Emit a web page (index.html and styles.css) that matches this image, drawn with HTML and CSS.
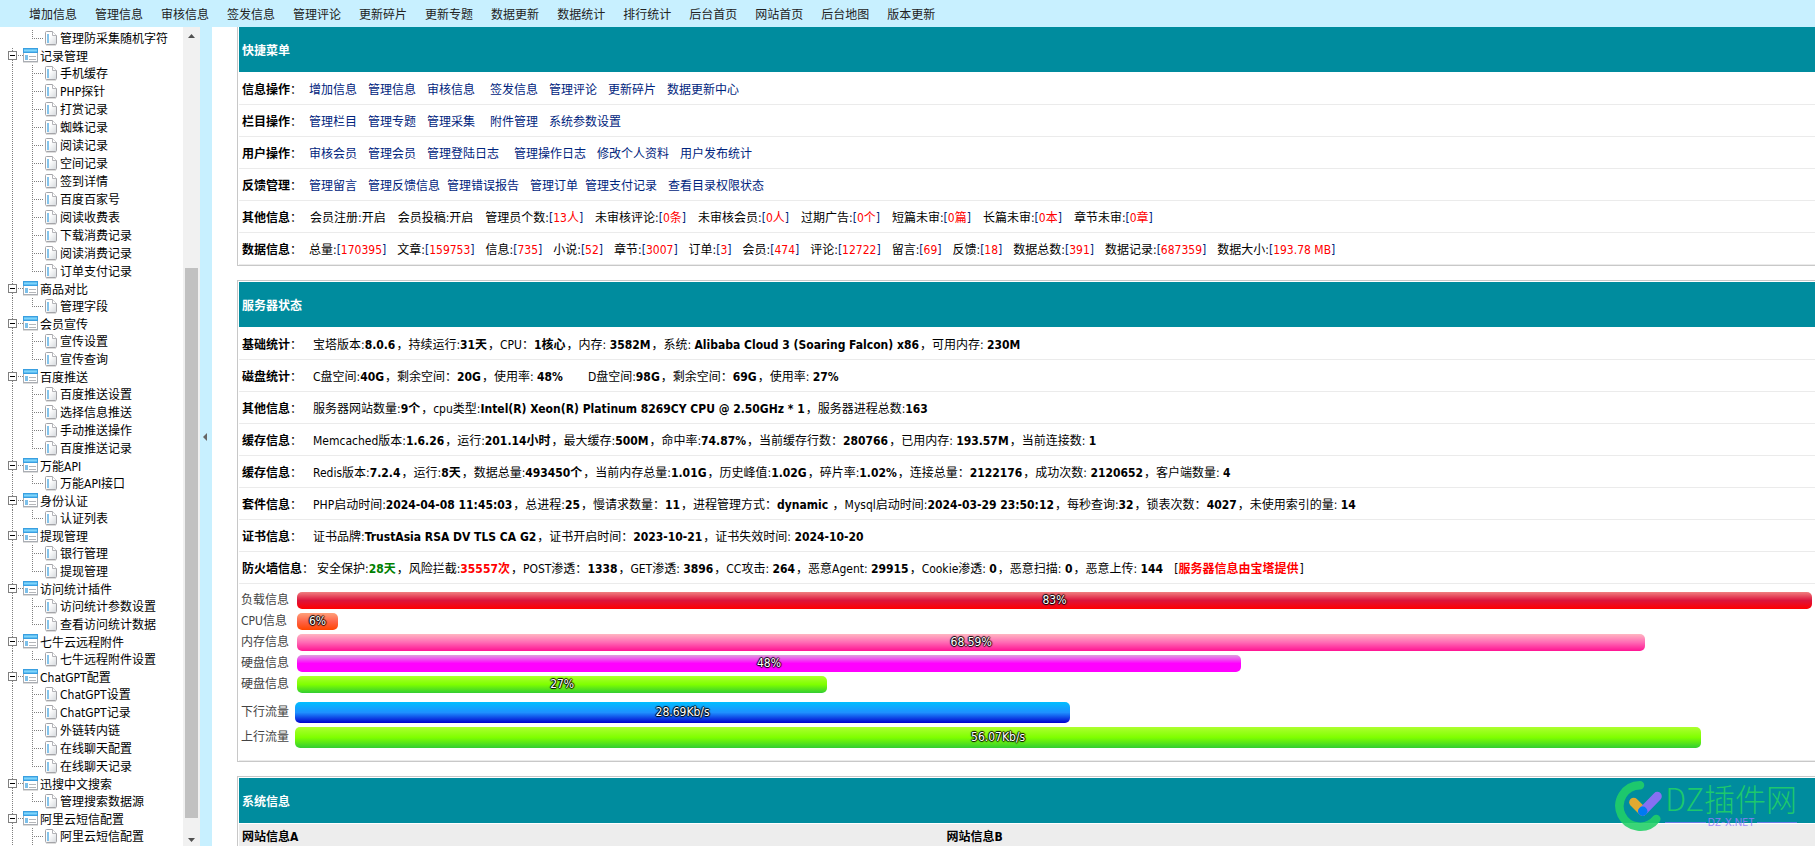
FILE: index.html
```html
<!DOCTYPE html>
<html lang="zh-CN">
<head>
<meta charset="utf-8">
<title>后台管理</title>
<link rel="stylesheet" href="styles.css">
</head>
<body>
<svg class="defs" aria-hidden="true">
  <defs>
    <linearGradient id="g-band" x1="0" y1="0" x2="0" y2="1">
      <stop offset="0" stop-color="#3aa5e6"/><stop offset=".35" stop-color="#8fe0ff"/><stop offset="1" stop-color="#4db2ee"/>
    </linearGradient>
    <linearGradient id="g-page" x1="0" y1="0" x2="1" y2="1">
      <stop offset=".4" stop-color="#fff"/><stop offset="1" stop-color="#d4d8dc"/>
    </linearGradient>
  </defs>
  <symbol id="i-group" viewBox="0 0 15 15">
    <rect x=".5" y=".5" width="14" height="13" fill="#fff" stroke="#a9adb3"/>
    <rect x="0" y="0" width="15" height="5" fill="#3a9fe0"/>
    <rect x="1" y="1" width="13" height="3" fill="url(#g-band)"/>
    <rect x="2" y="7" width="3" height="5" fill="#7cc0ea"/>
    <path d="M6 8.500h7M6 11.500h7" stroke="#b4b6ba"/>
    <path d="M0 14.500h15" stroke="#dcdcdc"/>
  </symbol>
  <symbol id="i-doc" viewBox="0 0 12 15">
    <path d="M.5 1.500Q.5.500 1.500.500H7.500L11.500 4.500V12.500Q11.500 13.500 10.500 13.500H1.500Q.5 13.500.5 12.500Z" fill="url(#g-page)" stroke="#a4a4a8"/>
    <path d="M7.500.500V4.500H11.500" fill="#fff" stroke="#b4b4b8"/>
    <path d="M2 3h2v9H2z" fill="#84c4ec"/>
    <path d="M1 14.500h10" stroke="#ddd"/>
  </symbol>
</svg>

<nav class="topbar">
  <a href="#">增加信息</a><a href="#">管理信息</a><a href="#">审核信息</a><a href="#">签发信息</a><a href="#">管理评论</a><a href="#">更新碎片</a><a href="#">更新专题</a><a href="#">数据更新</a><a href="#">数据统计</a><a href="#">排行统计</a><a href="#">后台首页</a><a href="#">网站首页</a><a href="#">后台地图</a><a href="#">版本更新</a>
</nav>

<div class="frame">
  <aside class="sidebar">
    <div class="tree">
      <ul>
        <li><a class="leaf" href="#"><svg class="doc"><use href="#i-doc"/></svg>管理防采集随机字符</a></li>
      </ul>
      <div class="group"><button class="toggle" aria-label="折叠"></button><svg class="folder"><use href="#i-group"/></svg>记录管理</div>
      <ul>
        <li><a class="leaf" href="#"><svg class="doc"><use href="#i-doc"/></svg>手机缓存</a></li>
        <li><a class="leaf" href="#"><svg class="doc"><use href="#i-doc"/></svg>PHP探针</a></li>
        <li><a class="leaf" href="#"><svg class="doc"><use href="#i-doc"/></svg>打赏记录</a></li>
        <li><a class="leaf" href="#"><svg class="doc"><use href="#i-doc"/></svg>蜘蛛记录</a></li>
        <li><a class="leaf" href="#"><svg class="doc"><use href="#i-doc"/></svg>阅读记录</a></li>
        <li><a class="leaf" href="#"><svg class="doc"><use href="#i-doc"/></svg>空间记录</a></li>
        <li><a class="leaf" href="#"><svg class="doc"><use href="#i-doc"/></svg>签到详情</a></li>
        <li><a class="leaf" href="#"><svg class="doc"><use href="#i-doc"/></svg>百度百家号</a></li>
        <li><a class="leaf" href="#"><svg class="doc"><use href="#i-doc"/></svg>阅读收费表</a></li>
        <li><a class="leaf" href="#"><svg class="doc"><use href="#i-doc"/></svg>下载消费记录</a></li>
        <li><a class="leaf" href="#"><svg class="doc"><use href="#i-doc"/></svg>阅读消费记录</a></li>
        <li><a class="leaf" href="#"><svg class="doc"><use href="#i-doc"/></svg>订单支付记录</a></li>
      </ul>
      <div class="group"><button class="toggle" aria-label="折叠"></button><svg class="folder"><use href="#i-group"/></svg>商品对比</div>
      <ul>
        <li><a class="leaf" href="#"><svg class="doc"><use href="#i-doc"/></svg>管理字段</a></li>
      </ul>
      <div class="group"><button class="toggle" aria-label="折叠"></button><svg class="folder"><use href="#i-group"/></svg>会员宣传</div>
      <ul>
        <li><a class="leaf" href="#"><svg class="doc"><use href="#i-doc"/></svg>宣传设置</a></li>
        <li><a class="leaf" href="#"><svg class="doc"><use href="#i-doc"/></svg>宣传查询</a></li>
      </ul>
      <div class="group"><button class="toggle" aria-label="折叠"></button><svg class="folder"><use href="#i-group"/></svg>百度推送</div>
      <ul>
        <li><a class="leaf" href="#"><svg class="doc"><use href="#i-doc"/></svg>百度推送设置</a></li>
        <li><a class="leaf" href="#"><svg class="doc"><use href="#i-doc"/></svg>选择信息推送</a></li>
        <li><a class="leaf" href="#"><svg class="doc"><use href="#i-doc"/></svg>手动推送操作</a></li>
        <li><a class="leaf" href="#"><svg class="doc"><use href="#i-doc"/></svg>百度推送记录</a></li>
      </ul>
      <div class="group"><button class="toggle" aria-label="折叠"></button><svg class="folder"><use href="#i-group"/></svg>万能API</div>
      <ul>
        <li><a class="leaf" href="#"><svg class="doc"><use href="#i-doc"/></svg>万能API接口</a></li>
      </ul>
      <div class="group"><button class="toggle" aria-label="折叠"></button><svg class="folder"><use href="#i-group"/></svg>身份认证</div>
      <ul>
        <li><a class="leaf" href="#"><svg class="doc"><use href="#i-doc"/></svg>认证列表</a></li>
      </ul>
      <div class="group"><button class="toggle" aria-label="折叠"></button><svg class="folder"><use href="#i-group"/></svg>提现管理</div>
      <ul>
        <li><a class="leaf" href="#"><svg class="doc"><use href="#i-doc"/></svg>银行管理</a></li>
        <li><a class="leaf" href="#"><svg class="doc"><use href="#i-doc"/></svg>提现管理</a></li>
      </ul>
      <div class="group"><button class="toggle" aria-label="折叠"></button><svg class="folder"><use href="#i-group"/></svg>访问统计插件</div>
      <ul>
        <li><a class="leaf" href="#"><svg class="doc"><use href="#i-doc"/></svg>访问统计参数设置</a></li>
        <li><a class="leaf" href="#"><svg class="doc"><use href="#i-doc"/></svg>查看访问统计数据</a></li>
      </ul>
      <div class="group"><button class="toggle" aria-label="折叠"></button><svg class="folder"><use href="#i-group"/></svg>七牛云远程附件</div>
      <ul>
        <li><a class="leaf" href="#"><svg class="doc"><use href="#i-doc"/></svg>七牛远程附件设置</a></li>
      </ul>
      <div class="group"><button class="toggle" aria-label="折叠"></button><svg class="folder"><use href="#i-group"/></svg>ChatGPT配置</div>
      <ul>
        <li><a class="leaf" href="#"><svg class="doc"><use href="#i-doc"/></svg>ChatGPT设置</a></li>
        <li><a class="leaf" href="#"><svg class="doc"><use href="#i-doc"/></svg>ChatGPT记录</a></li>
        <li><a class="leaf" href="#"><svg class="doc"><use href="#i-doc"/></svg>外链转内链</a></li>
        <li><a class="leaf" href="#"><svg class="doc"><use href="#i-doc"/></svg>在线聊天配置</a></li>
        <li><a class="leaf" href="#"><svg class="doc"><use href="#i-doc"/></svg>在线聊天记录</a></li>
      </ul>
      <div class="group"><button class="toggle" aria-label="折叠"></button><svg class="folder"><use href="#i-group"/></svg>迅搜中文搜索</div>
      <ul>
        <li><a class="leaf" href="#"><svg class="doc"><use href="#i-doc"/></svg>管理搜索数据源</a></li>
      </ul>
      <div class="group"><button class="toggle" aria-label="折叠"></button><svg class="folder"><use href="#i-group"/></svg>阿里云短信配置</div>
      <ul class="open">
        <li><a class="leaf" href="#"><svg class="doc"><use href="#i-doc"/></svg>阿里云短信配置</a></li>
      </ul>
    </div>
    <div class="scrollbar">
      <svg class="arrow" viewBox="0 0 7 4"><path d="M0 4L3.500 0L7 4Z"/></svg>
      <div class="rail"><div class="thumb"></div></div>
      <svg class="arrow" viewBox="0 0 7 4"><path d="M0 0L3.500 4L7 0Z"/></svg>
    </div>
  </aside>
  <button class="splitter" aria-label="收起菜单"><svg viewBox="0 0 4 8"><path d="M4 0V8L0 4Z"/></svg></button>

  <main class="content">
    <section class="panel first">
      <h2>快捷菜单</h2>
      <div class="row links"><b class="label">信息操作<i>：</i></b><a href="#">增加信息</a><a href="#">管理信息</a><a href="#">审核信息</a><a class="wide" href="#">签发信息</a><a href="#">管理评论</a><a href="#">更新碎片</a><a href="#">数据更新中心</a></div>
      <div class="row links"><b class="label">栏目操作<i>：</i></b><a href="#">管理栏目</a><a href="#">管理专题</a><a href="#">管理采集</a><a class="wide" href="#">附件管理</a><a href="#">系统参数设置</a></div>
      <div class="row links"><b class="label">用户操作<i>：</i></b><a href="#">审核会员</a><a href="#">管理会员</a><a href="#">管理登陆日志</a><a class="wide" href="#">管理操作日志</a><a href="#">修改个人资料</a><a href="#">用户发布统计</a></div>
      <div class="row links"><b class="label">反馈管理<i>：</i></b><a href="#">管理留言</a><a href="#">管理反馈信息</a><a class="tight" href="#">管理错误报告</a><a href="#">管理订单</a><a class="tight" href="#">管理支付记录</a><a href="#">查看目录权限状态</a></div>
      <div class="row links counts"><b class="label">其他信息<i>：</i></b><span>会员注册:开启</span><span>会员投稿:开启</span><span>管理员个数:<a href="#">[<em>13人</em>]</a></span><span>未审核评论:<a href="#">[<em>0条</em>]</a></span><span>未审核会员:<a href="#">[<em>0人</em>]</a></span><span>过期广告:<a href="#">[<em>0个</em>]</a></span><span>短篇未审:<a href="#">[<em>0篇</em>]</a></span><span>长篇未审:<a href="#">[<em>0本</em>]</a></span><span>章节未审:<a href="#">[<em>0章</em>]</a></span></div>
      <div class="row links"><b class="label">数据信息<i>：</i></b><span>总量:<a href="#">[<em>170395</em>]</a></span><span>文章:<a href="#">[<em>159753</em>]</a></span><span>信息:<a href="#">[<em>735</em>]</a></span><span>小说:<a href="#">[<em>52</em>]</a></span><span>章节:<a href="#">[<em>3007</em>]</a></span><span>订单:<a href="#">[<em>3</em>]</a></span><span>会员:<a href="#">[<em>474</em>]</a></span><span>评论:<a href="#">[<em>12722</em>]</a></span><span>留言:<a href="#">[<em>69</em>]</a></span><span>反馈:<a href="#">[<em>18</em>]</a></span><span>数据总数:<a href="#">[<em>391</em>]</a></span><span>数据记录:<a href="#">[<em>687359</em>]</a></span><span>数据大小:<a href="#">[<em>193.78 MB</em>]</a></span></div>
    </section>

    <section class="panel status">
      <h2>服务器状态</h2>
      <div class="row"><b class="label">基础统计<i>：</i></b><p>宝塔版本:<b>8.0.6</b>，持续运行:<b>31天</b>，CPU：<b>1核心</b>，内存: <b>3582M</b>，系统: <b>Alibaba Cloud 3 (Soaring Falcon) x86</b>，可用内存: <b>230M</b></p></div>
      <div class="row"><b class="label">磁盘统计<i>：</i></b><p>C盘空间:<b>40G</b>，剩余空间：<b>20G</b>，使用率: <b>48%</b> &nbsp; &nbsp; &nbsp; D盘空间:<b>98G</b>，剩余空间：<b>69G</b>，使用率: <b>27%</b></p></div>
      <div class="row"><b class="label">其他信息<i>：</i></b><p>服务器网站数量:<b>9个</b>，cpu类型:<b>Intel(R) Xeon(R) Platinum 8269CY CPU @ 2.50GHz * 1</b>，服务器进程总数:<b>163</b></p></div>
      <div class="row"><b class="label">缓存信息<i>：</i></b><p>Memcached版本:<b>1.6.26</b>，运行:<b>201.14小时</b>，最大缓存:<b>500M</b>，命中率:<b>74.87%</b>，当前缓存行数：<b>280766</b>，已用内存: <b>193.57M</b>，当前连接数: <b>1</b></p></div>
      <div class="row"><b class="label">缓存信息<i>：</i></b><p>Redis版本:<b>7.2.4</b>，运行:<b>8天</b>，数据总量:<b>493450个</b>，当前内存总量:<b>1.01G</b>，历史峰值:<b>1.02G</b>，碎片率:<b>1.02%</b>，连接总量：<b>2122176</b>，成功次数: <b>2120652</b>，客户端数量: <b>4</b></p></div>
      <div class="row"><b class="label">套件信息<i>：</i></b><p>PHP启动时间:<b>2024-04-08 11:45:03</b>，总进程:<b>25</b>，慢请求数量：<b>11</b>，进程管理方式：<b>dynamic</b> ，Mysql启动时间:<b>2024-03-29 23:50:12</b>，每秒查询:<b>32</b>，锁表次数：<b>4027</b>，未使用索引的量: <b>14</b></p></div>
      <div class="row"><b class="label">证书信息<i>：</i></b><p>证书品牌:<b>TrustAsia RSA DV TLS CA G2</b>，证书开启时间：<b>2023-10-21</b>，证书失效时间: <b>2024-10-20</b></p></div>
      <div class="row"><b class="label">防火墙信息<i>：</i></b><p>安全保护:<b class="ok">28天</b>，风险拦截:<b class="bad">35557次</b>，POST渗透：<b>1338</b>，GET渗透: <b>3896</b>，CC攻击: <b>264</b>，恶意Agent: <b>29915</b>，Cookie渗透: <b>0</b>，恶意扫描: <b>0</b>，恶意上传: <b>144</b> &nbsp; [<b class="bad">服务器信息由宝塔提供</b>]</p></div>
      <div class="meters">
        <div class="meter"><span>负载信息</span><div class="track"><div class="bar red" style="width:100%">83%</div></div></div>
        <div class="meter"><span>CPU信息</span><div class="track"><div class="bar orange" style="width:2.7%">6%</div></div></div>
        <div class="meter"><span>内存信息</span><div class="track"><div class="bar pink" style="width:89%">68.59%</div></div></div>
        <div class="meter"><span>硬盘信息</span><div class="track"><div class="bar magenta" style="width:62.3%">48%</div></div></div>
        <div class="meter"><span>硬盘信息</span><div class="track"><div class="bar green" style="width:35%">27%</div></div></div>
      </div>
      <div class="meters net">
        <div class="meter"><span>下行流量</span><div class="track"><div class="bar blue" style="width:51.1%">28.69Kb/s</div></div></div>
        <div class="meter"><span>上行流量</span><div class="track"><div class="bar green" style="width:92.7%">56.07Kb/s</div></div></div>
      </div>
    </section>

    <section class="panel">
      <h2>系统信息</h2>
      <table class="sites"><tr><th>网站信息A</th><th>网站信息B</th></tr></table>
    </section>
  </main>
</div>

<div class="brand">
  <svg viewBox="0 0 50 52" aria-hidden="true">
    <path d="M26 5.300A20.700 20.700 0 1 0 42.300 39" fill="none" stroke="#22d167" stroke-width="8.500" stroke-linecap="round"/>
    <path d="M19.700 22.300L28.700 31.300" stroke="#ffae22" stroke-width="9" stroke-linecap="round"/>
    <path d="M28.700 31.300L43.300 16.300" stroke="#9a6cff" stroke-width="9" stroke-linecap="round"/>
    <circle cx="28.700" cy="31.300" r="4.700" fill="#0078ff"/>
  </svg>
  <div class="brand-text"><strong>DZ插件网</strong><small>DZ-X.NET</small></div>
</div>
</body>
</html>
```

FILE: styles.css
```css
* { box-sizing: border-box; }
body {
  margin: 0;
  height: 100vh;
  display: flex;
  flex-direction: column;
  overflow: hidden;
  background: #fff;
  color: #000;
  font: 12px/18px "DejaVu Sans Condensed", "Noto Sans CJK SC", sans-serif;
}
a { color: inherit; text-decoration: none; }
ul { list-style: none; margin: 0; padding: 0; }
p, h2 { margin: 0; font-size: 12px; }
button { border: 0; padding: 0; background: none; }
em, i { font-style: normal; }
.defs { position: absolute; width: 0; height: 0; }

.topbar {
  flex: none;
  display: flex;
  gap: 18px;
  height: 27px;
  padding: 6px 29px 0;
  background: #c8f0ff;
  color: #222;
}
.frame { flex: 1; display: flex; min-height: 0; }

.sidebar { flex: none; display: flex; width: 200px; overflow: hidden; }
.tree {
  --v: repeating-linear-gradient(to bottom, #808080 0 1px, transparent 1px 2px);
  --h: repeating-linear-gradient(to right, #808080 0 1px, transparent 1px 2px);
  flex: 1;
  padding-top: 3px;
  white-space: nowrap;
}
.leaf {
  display: flex;
  align-items: center;
  gap: 3px;
  height: 18px;
  padding-left: 45px;
  background:
    var(--v) 12px 0 / 1px 100% no-repeat,
    var(--v) 32px 0 / 1px 100% no-repeat,
    var(--h) 34px 8px / 10px 1px no-repeat;
}
li:last-child .leaf { background-size: 1px 100%, 1px 9px, 10px 1px; }
.open li:last-child .leaf { background-size: 1px 100%, 1px 100%, 10px 1px; }
.tree > ul:first-child .leaf { background-size: 0 0, 1px 9px, 10px 1px; }
.doc { flex: none; width: 12px; height: 15px; margin-bottom: 2px; }
.group {
  display: flex;
  align-items: center;
  height: 17px;
  padding-left: 8px;
  background:
    var(--v) 12px 0 / 1px 100% no-repeat,
    var(--h) 18px 7px / 5px 1px no-repeat;
}
.toggle {
  width: 9px;
  height: 9px;
  margin: 0 6px 2px 0;
  border: 1px solid #808080;
  background: linear-gradient(#000, #000) center / 5px 1px no-repeat, #fff;
}
.folder { flex: none; width: 15px; height: 15px; margin: 0 2px 2px 0; }

.scrollbar {
  flex: none;
  display: flex;
  flex-direction: column;
  align-items: center;
  width: 17px;
  padding: 7px 0 4px;
  background: #f1f1f1;
}
.arrow { width: 7px; height: 4px; fill: #505050; }
.rail { flex: 1; display: flex; flex-direction: column; justify-content: flex-end; padding: 6px 0 20px; }
.thumb { width: 13px; height: 71%; background: #c1c1c1; }
.splitter {
  flex: none;
  display: flex;
  align-items: center;
  justify-content: center;
  width: 12px;
  padding-right: 2px;
  background: #c8f0ff;
}
.splitter svg { width: 4px; height: 8px; fill: #666; }

.content { flex: 1; min-width: 0; padding-left: 25px; overflow: hidden; }
.panel {
  margin-bottom: 14px;
  padding: 1px 0 0 1px;
  border: solid #c8c8c8;
  border-width: 1px 0 1px 1px;
  background: #fff;
}
.panel.first { padding-top: 0; border-top: 0; }
.panel h2 {
  height: 45px;
  margin-bottom: 1px;
  padding: 0 3px;
  background: #008c9e;
  color: #fff;
  line-height: 49px;
}
.row {
  display: flex;
  align-items: center;
  height: 32px;
  padding: 2px 3px 0;
  border-bottom: 1px solid #ebebeb;
  white-space: nowrap;
}
.row p b { margin-right: 1px; }
.label { flex: none; min-width: 67px; padding-right: 3px; }
.label i { font-weight: 400; }
.status .label { min-width: 71px; }
.links { gap: 11px; }
.counts { gap: 12px; }
.links .label { margin-right: -11px; }
.links a { color: #00247d; }
.links .wide { margin-left: 4px; }
.links .tight { margin-left: -4px; }
.links em { color: #f00; }
.ok { color: #008000; }
.bad { color: #f00; }

.meters {
  display: flex;
  flex-direction: column;
  gap: 4px;
  padding: 8px 3px 9px 2px;
  color: #444;
}
.meters.net { padding: 0 3px 12px 2px; border-bottom: 1px solid #ebebeb; }
.meter { display: flex; align-items: center; height: 17px; }
.meter span { flex: none; width: 56px; padding-bottom: 2px; }
.net .meter { height: 21px; }
.net .meter span { width: 54px; }
.track { flex: 1; height: 100%; }
.bar {
  display: flex;
  align-items: center;
  justify-content: center;
  height: 100%;
  padding-bottom: 2px;
  border-radius: 5px;
  color: #fff;
  text-shadow: 1px 0 1px #000, -1px 0 1px #000, 0 1px 1px #000, 0 -1px 1px #000;
}
.red { background: linear-gradient(lightcoral, crimson 50%, red); }
.orange { background: linear-gradient(lightsalmon, tomato 50%, orangered); }
.pink { background: linear-gradient(lightpink, hotpink 50%, deeppink); }
.magenta { background: linear-gradient(plum, magenta 50%, magenta); }
.green { background: linear-gradient(greenyellow, chartreuse 50%, limegreen); }
.blue { background: linear-gradient(deepskyblue, dodgerblue 50%, mediumblue); }

.sites { width: 100%; border-collapse: collapse; background: #ededed; }
.sites th { width: 44.700%; height: 25px; padding: 0 3px; text-align: left; }
.sites th:last-child { width: auto; }

.brand {
  position: absolute;
  right: 18px;
  bottom: 14px;
  display: flex;
  gap: 1px;
  opacity: .88;
}
.brand svg { width: 50px; height: 52px; }
.brand-text { font-family: "Noto Sans CJK SC", sans-serif; }
.brand strong {
  display: block;
  color: #22d167;
  font-size: 31px;
  font-weight: 300;
  line-height: 36px;
}
.brand small {
  display: flex;
  align-items: center;
  gap: 2px;
  color: #9a7cff;
  font: 10px/12px Inter, sans-serif;
}
.brand small::before, .brand small::after { content: ""; flex: 1; height: 1px; background: #7a7cf0; }
```
